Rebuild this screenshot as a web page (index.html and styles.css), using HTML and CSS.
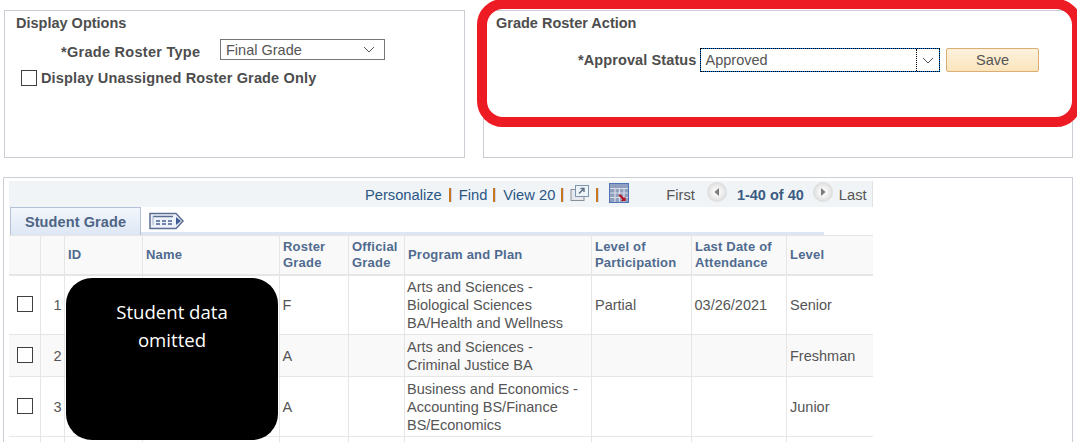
FILE: index.html
```html
<!DOCTYPE html>
<html lang="en">
<head>
<meta charset="utf-8">
<title>Grade Roster</title>
<link rel="stylesheet" href="styles.css">
</head>
<body>
<div class="page">
  <div class="top-row">
    <section class="panel panel-left">
      <h2 class="panel-title">Display Options</h2>
      <div class="type-row">
        <label class="field-label">*Grade Roster Type</label>
        <div class="select select-type">
          <span>Final Grade</span>
          <svg class="chev" width="12" height="7" viewBox="0 0 12 7"><path d="M1 1l5 5 5-5" fill="none" stroke="#555" stroke-width="1"/></svg>
        </div>
      </div>
      <div class="check-row">
        <span class="check"></span>
        <span class="field-label">Display Unassigned Roster Grade Only</span>
      </div>
    </section>
    <section class="panel panel-right">
      <h2 class="panel-title">Grade Roster Action</h2>
      <div class="action-row">
        <label class="field-label">*Approval Status</label>
        <div class="select select-status">
          <span class="status-value">Approved</span>
          <span class="status-arrow">
            <svg width="12" height="7" viewBox="0 0 12 7"><path d="M1 1l5 5 5-5" fill="none" stroke="#555" stroke-width="1"/></svg>
          </span>
        </div>
        <button class="save" type="button">Save</button>
      </div>
    </section>
  </div>

  <section class="panel grid-panel">
    <div class="grid">
      <div class="toolbar">
        <a class="link">Personalize</a><i class="sep sep-first"></i>
        <a class="link">Find</a><i class="sep"></i>
        <a class="link">View 20</a><i class="sep"></i>
        <svg class="tool-icon" width="20" height="18" viewBox="0 0 20 18">
          <rect x="1" y="5.5" width="13" height="11" fill="#e5e9ee" stroke="#8a9097"/>
          <rect x="5.5" y="1.5" width="13" height="11" fill="#eef3f8" stroke="#7f95ad"/>
          <path d="M9 9.5l5-5M10.5 4.500h3.500v3.500" fill="none" stroke="#5b6f86" stroke-width="1.4"/>
        </svg><i class="sep"></i>
        <svg class="grid-icon" width="20" height="20" viewBox="0 0 20 20">
          <rect x="0.5" y="0.5" width="19" height="19" fill="#8f9fc0" stroke="#4f74b5"/>
          <path d="M1 5.5h18M1 10h18M1 14.5h18M6 5v14M10.500 5v14M15 5v14" stroke="#d9dde6" stroke-width="1.2"/>
          <path d="M11 11l4 4 1.500-1.500V18H12l1.500-1.500-4-4z" fill="#b80f1f"/>
        </svg>
        <span class="pager-first">First</span>
        <span class="pager-btn"><svg width="8" height="10" viewBox="0 0 8 10"><path d="M6 1v8L1.500 5z" fill="#7a7a7a"/></svg></span>
        <b class="pager-count">1-40 of 40</b>
        <span class="pager-btn"><svg width="8" height="10" viewBox="0 0 8 10"><path d="M2 1v8l4.500-4z" fill="#7a7a7a"/></svg></span>
        <span class="pager-last">Last</span>
      </div>
      <div class="tab-row">
        <div class="tab">Student Grade</div>
        <svg class="tab-icon" width="36" height="20" viewBox="0 0 36 20">
          <path d="M1 2.500h26l7 7.500-7 7.500H1z" fill="#eef2f9" stroke="#5c6e93" stroke-width="1.500"/>
          <path d="M4 5.500h20" stroke="#5c6e93" stroke-width="1.500"/>
          <path d="M4 5v9" stroke="#9fb0cf"/>
          <path d="M7 10h4M13 10h4M19 10h4M7 13h4M13 13h4M19 13h4" stroke="#4a5f9a" stroke-width="1.300"/>
          <path d="M27 6l5 4-5 4z" fill="#3f5d94"/>
        </svg>
      </div>
      <table class="roster">
        <colgroup>
          <col class="c-sel"><col class="c-num"><col class="c-id"><col class="c-name"><col class="c-grade"><col class="c-off"><col class="c-prog"><col class="c-part"><col class="c-date"><col class="c-lvl">
        </colgroup>
        <thead>
          <tr>
            <th></th><th></th><th>ID</th><th>Name</th><th>Roster<br>Grade</th><th>Official<br>Grade</th><th>Program and Plan</th><th>Level of<br>Participation</th><th>Last Date of<br>Attendance</th><th>Level</th>
          </tr>
        </thead>
        <tbody>
          <tr class="row-a">
            <td class="sel"><span class="check"></span></td><td class="num">1</td><td></td><td></td><td>F</td><td></td>
            <td class="prog">Arts and Sciences -<br>Biological Sciences<br>BA/Health and Wellness</td><td class="wide">Partial</td><td>03/26/2021</td><td class="wide">Senior</td>
          </tr>
          <tr class="row-b">
            <td class="sel"><span class="check"></span></td><td class="num">2</td><td></td><td></td><td>A</td><td></td>
            <td class="prog">Arts and Sciences -<br>Criminal Justice BA</td><td></td><td></td><td class="wide">Freshman</td>
          </tr>
          <tr class="row-c">
            <td class="sel"><span class="check"></span></td><td class="num">3</td><td></td><td></td><td>A</td><td></td>
            <td class="prog">Business and Economics -<br>Accounting BS/Finance<br>BS/Economics</td><td></td><td></td><td class="wide">Junior</td>
          </tr>
          <tr class="row-d">
            <td></td><td></td><td></td><td></td><td></td><td></td><td></td><td></td><td></td><td></td>
          </tr>
        </tbody>
      </table>
    </div>
  </section>

  <div class="redaction">Student data<br>omitted</div>
  <div class="callout"></div>
</div>
</body>
</html>
```

FILE: styles.css
```css
* { box-sizing: border-box; }
html, body { margin: 0; padding: 0; background: #fff; overflow: hidden; }
body { font-family: "Liberation Sans", Arial, sans-serif; font-size: 14.5px; color: #555; }
.page { position: relative; width: 1077px; height: 442px; overflow: hidden; padding: 10px 0 0 4px; }

.top-row { display: flex; gap: 18px; }
.panel { border: 1px solid #ccced6; background: #fff; }
.panel-left { width: 461px; height: 148px; padding: 3px 11px; }
.panel-right { width: 590px; height: 148px; padding: 3px 12px; }
.panel-title { margin: 0; font-size: 14.500px; line-height: 18px; font-weight: bold; color: #4d4d4d; }

.field-label { font-weight: bold; font-size: 14.500px; color: #4d4d4d; white-space: nowrap; letter-spacing: 0.15px; }
.type-row { display: flex; align-items: flex-start; margin-top: 7px; padding-left: 45px; }
.type-row .field-label { line-height: 22px; width: 159px; margin-top: 2px; letter-spacing: 0.28px; }
.select { position: relative; display: flex; align-items: center; background: #fff; font-size: 14.500px; color: #555; }
.select-type { width: 165px; height: 21px; border: 1px solid #767676; padding: 0 5px; justify-content: space-between; line-height: 18px; }
.select-type span { margin-top: 1px; }
.select-type .chev { margin-right: 4px; }
.check-row { display: flex; align-items: center; gap: 4px; margin-top: 5px; padding-left: 5px; height: 20px; }
.check { display: block; width: 16px; height: 16px; border: 1px solid #3f3f3f; background: #fff; }

.action-row { display: flex; align-items: center; margin-top: 16px; padding-left: 82px; }
.action-row .field-label { width: 122px; letter-spacing: 0.1px; }
.select-status { width: 240px; height: 24px; border: 1px solid #0078d7; outline: 1px dotted #000; outline-offset: -1px; padding-left: 4.5px; }
.status-value { flex: 1; }
.status-arrow { width: 23px; height: 100%; display: flex; align-items: center; justify-content: center; border-left: 1px dotted #000; }
.save { width: 93px; height: 24px; margin-left: 6px; padding: 0; border: 1px solid #dcae74; border-radius: 2px; background: linear-gradient(#fdf2dc, #fae4bd); font: 14.500px "Liberation Sans", Arial, sans-serif; color: #555; }

.grid-panel { width: 1070px; height: 280px; margin: 19px 0 0 -1px; padding: 3px 5px 0; }
.grid { width: 864px; }
.toolbar { height: 26px; padding: 2px 0 0 356px; background: #f0f4f6; display: flex; align-items: center; font-size: 14.700px; border-right: 1px solid #dfe3e6; }
.link { color: #2a5685; }
.sep { display: inline-block; width: 2px; height: 14px; background: #c9771f; box-shadow: 1px 0 #ccd3ee; margin: 0 8px 0 6px; }
.sep-first { margin-left: 7px; }
.tool-icon { margin: -4px 0 0 -1px; }
.tool-icon + .sep { margin-left: 6px; margin-right: 13px; }
.grid-icon { margin-top: -5px; margin-left: -2px; }
.pager-first { margin-left: 37px; color: #555; }
.pager-btn { width: 20px; height: 20px; border-radius: 50%; margin-left: 12px; display: flex; align-items: center; justify-content: center; background: radial-gradient(circle, #f4f4f4 30%, #d3d3d3 85%); margin-top: -6px; }
.pager-count { margin-left: 10px; color: #3b5b83; font-size: 14.500px; }
.pager-count + .pager-btn { margin-left: 9px; }
.pager-last { margin-left: 6px; color: #555; }

.tab-row { height: 28px; display: flex; align-items: flex-start; position: relative; }
.tab { width: 131px; height: 28px; margin-left: 1px; border: 1px solid #b4c0d4; border-bottom: 0; background: linear-gradient(#f3f6fc, #dde7f4); color: #4d6485; font-weight: bold; text-align: center; line-height: 28px; letter-spacing: 0.1px; }
.tab-icon { margin: 4px 0 0 8px; }
.tab-row::after { content: ""; position: absolute; left: 132px; right: 49px; bottom: 0; height: 3px; background: #dce6f2; }

.roster { width: 864px; table-layout: fixed; border-collapse: collapse; font-size: 14.500px; }
.c-sel { width: 31px; } .c-num { width: 24px; } .c-id { width: 78px; } .c-name { width: 137px; } .c-grade { width: 69px; }
.c-off { width: 56px; } .c-prog { width: 187px; } .c-part { width: 100px; } .c-date { width: 95px; } .c-lvl { width: 87px; }
.roster th { height: 39px; background: #f9f9f9; border: 1px solid #e6e6e6; border-bottom-width: 2px; color: #4f6b8f; font-size: 13px; font-weight: bold; line-height: 16px; text-align: left; padding: 0 3px 0 3.5px; white-space: nowrap; letter-spacing: 0.2px; }
.roster td { border: 1px solid #e6e6e6; padding: 0 3px; line-height: 18px; color: #555; vertical-align: middle; white-space: nowrap; }
.roster td.prog { padding-left: 2.5px; }
.roster td.wide { padding-left: 3.5px; }
.roster tr > :first-child { border-left: 0; }
.roster tr > :last-child { border-right: 0; }
.row-a td { height: 60px; }
.row-b td { height: 42px; background: #f9f9f9; }
.row-c td { height: 60px; }
.row-d td { height: 20px; }
.sel .check { margin: -2px 0 0 5px; }
.roster td.num { text-align: right; padding-right: 2px; }

.redaction { position: absolute; left: 66px; top: 278px; width: 212px; height: 162px; border-radius: 26px; background: #000; color: #fff; font-family: "Open Sans", sans-serif; font-size: 18.600px; line-height: 28px; text-align: center; padding-top: 20px; }
.callout { position: absolute; left: 477px; top: -1px; width: 605px; height: 128px; border: 10px solid #ed1c24; border-radius: 26px; pointer-events: none; }
```
